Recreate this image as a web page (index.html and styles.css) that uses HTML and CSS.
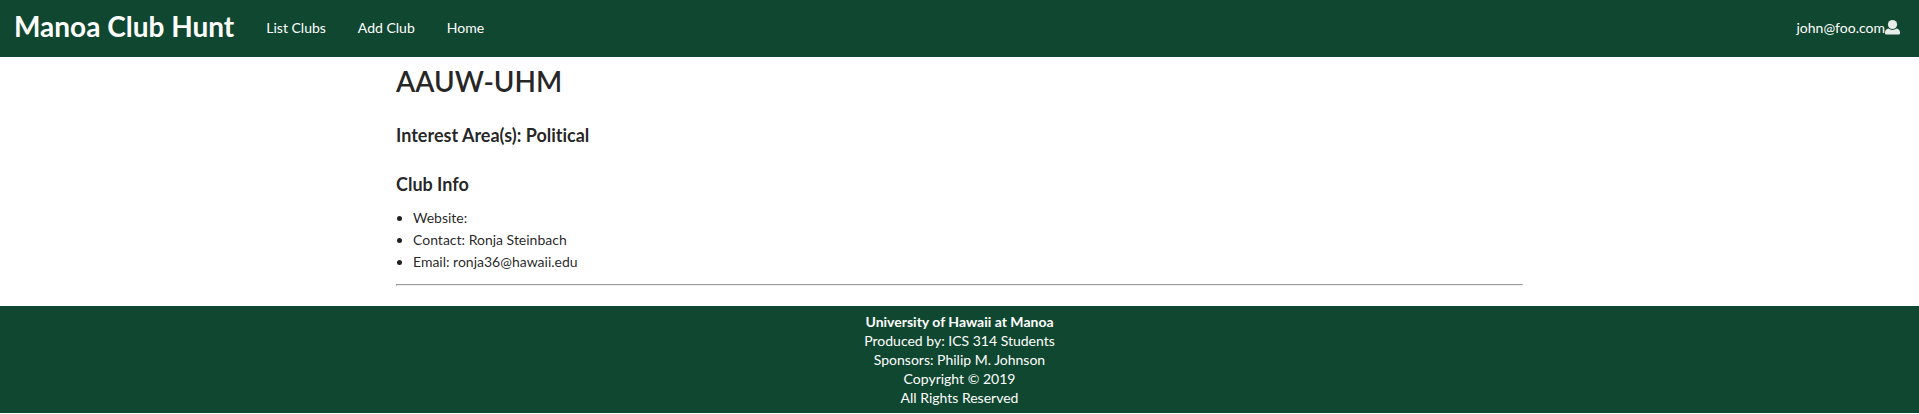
FILE: index.html
```html
<!DOCTYPE html>
<html lang="en">
<head>
<meta charset="utf-8">
<title>Manoa Club Hunt</title>
<link rel="stylesheet" href="styles.css">
</head>
<body>
<nav class="menu">
  <a class="brand" href="#"><h1 class="brand-title">Manoa Club Hunt</h1></a>
  <a class="item" href="#">List Clubs</a>
  <a class="item" href="#">Add Club</a>
  <a class="item" href="#">Home</a>
  <button class="user" type="button">john@foo.com<svg class="user-icon" viewBox="0 0 15 15" aria-hidden="true"><ellipse cx="7.500" cy="4.500" rx="4.600" ry="4.500" fill="currentColor"/><path fill="currentColor" d="M3.500 8.600C1.200 9.200 0 10.600 0 12.600V13.600Q0 14.600 1.200 14.600H13.800Q15 14.600 15 13.600V12.600C15 10.600 13.800 9.200 11.500 8.600C9.300 10.400 5.700 10.400 3.500 8.600Z"/></svg></button>
</nav>
<main class="container">
  <h1 class="club-name">AAUW-UHM</h1>
  <h3 class="section-title">Interest Area(s): Political</h3>
  <h3 class="section-title">Club Info</h3>
  <ul class="info">
    <li>Website:</li>
    <li>Contact: Ronja Steinbach</li>
    <li>Email: ronja36@hawaii.edu</li>
  </ul>
  <hr class="rule">
</main>
<footer class="footer">
  <b>University of Hawaii at Manoa</b><br>
  Produced by: ICS 314 Students<br>
  Sponsors: Philip M. Johnson<br>
  Copyright © 2019<br>
  All Rights Reserved
</footer>
</body>
</html>
```
FILE: styles.css
```css
* { box-sizing: border-box; }
body {
  margin: 0;
  background: #fff;
  color: rgba(0, 0, 0, 0.87);
  font: 14px/20px Lato, "Liberation Sans", sans-serif;
  font-variant-ligatures: none;
}
.menu {
  display: flex;
  align-items: stretch;
  min-height: 57px;
  background: #104730;
  color: #fff;
}
.brand, .item {
  display: flex;
  align-items: center;
  padding: 0 16px 2px;
  color: #fff;
  text-decoration: none;
}
.brand { padding: 0 16px 6px 14px; }
.brand-title { margin: 0; font-size: 28px; line-height: 36px; }
.user {
  display: flex;
  align-items: center;
  margin-left: auto;
  padding: 0 19px 2px;
  border: 0;
  background: none;
  color: #fff;
  font: inherit;
  font-variant-ligatures: none;
}
.user-icon { width: 15px; height: 15px; opacity: 0.9; }
.container { width: 1127px; max-width: 100%; margin: 0 auto; }
.club-name { margin: 6px 0 0; font-size: 28px; font-weight: 600; line-height: 36px; }
.section-title { margin: 24px 0 0; font-size: 18px; font-weight: 700; line-height: 25px; }
.info { margin: 10px 0; padding-left: 17px; line-height: 22px; }
.rule { margin: 11px 0 20px; }
.footer {
  padding: 6px 0;
  background: #104730;
  color: #fff;
  line-height: 19px;
  text-align: center;
}
```
